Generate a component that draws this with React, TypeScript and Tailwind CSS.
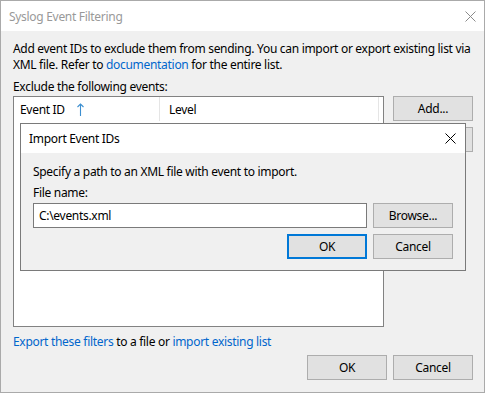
import React from 'react'

const font = { fontFamily: '"Noto Sans", "Segoe UI", Arial, sans-serif' }

function Btn({ label, focused = false }: { label: string; focused?: boolean }) {
  return (
    <button
      className={`flex h-[25px] w-[80px] shrink-0 items-center justify-center bg-[#e1e1e1] text-[12px] text-black ${
        focused ? 'border-2 border-[#0078d7]' : 'border border-[#adadad]'
      }`}
    >
      {label}
    </button>
  )
}

function CloseIcon({ color }: { color: string }) {
  return (
    <svg width="11" height="11" viewBox="0 0 11 11" fill="none">
      <path d="M0.5 0.5L10.5 10.5M10.5 0.5L0.5 10.5" stroke={color} strokeWidth="1" />
    </svg>
  )
}

export default function App() {
  return (
    <div style={font} className="relative flex h-[393px] w-[485px] flex-col border border-[#aaaaaa] bg-white text-[12px] leading-[15px] tracking-[-0.3px] text-black">
      {/* title bar */}
      <div className="flex h-[30px] shrink-0 items-center justify-between bg-white pl-[8px] pr-[8px]">
        <span className="text-[#999999]">Syslog Event Filtering</span>
        <CloseIcon color="#8a8a8a" />
      </div>

      <div className="flex flex-1 flex-col bg-[#f0f0f0] pl-[12px] pr-[11px] pt-[10px]">
        <p className="whitespace-nowrap leading-[16px]">
          Add event IDs to exclude them from sending. You can import or export existing list via
          <br />
          XML file. Refer to <span className="text-[#0066cc]">documentation</span> for the entire list.
        </p>
        <div className="mt-[6px]">Exclude the following events:</div>

        <div className="mt-[2px] flex gap-[9px]">
          <div className="h-[231px] w-[371px] border border-[#828282] bg-white">
            <div className="flex h-[24px] items-center">
              <div className="flex h-full w-[146px] items-center gap-[12px] border-r border-[#e5e5e5] pl-[6px]">
                <span>Event ID</span>
                <svg width="7" height="13" viewBox="0 0 7 13" fill="none">
                  <path d="M3.5 1V13M0.5 4L3.5 1L6.5 4" stroke="#3c8fd0" strokeWidth="1.1" />
                </svg>
              </div>
              <div className="flex h-full w-[219px] items-center border-r border-[#e5e5e5] pl-[9px]">Level</div>
            </div>
          </div>
          <div className="flex flex-col gap-[6px]">
            <Btn label="Add..." />
            <Btn label="Remove" />
          </div>
        </div>

        <div className="mt-[7px]">
          <span className="text-[#0066cc]">Export these filters</span> to a file or{' '}
          <span className="text-[#0066cc]">import existing list</span>
        </div>

        <div className="mt-[6px] flex justify-end gap-[6px]">
          <Btn label="OK" />
          <Btn label="Cancel" />
        </div>
      </div>

      {/* modal dialog */}
      <div className="absolute left-[19px] top-[122px] flex h-[148px] w-[446px] flex-col border border-[#7a7a7a] bg-white">
        <div className="flex h-[29px] shrink-0 items-center justify-between bg-white pl-[8px] pr-[9px]">
          <span>Import Event IDs</span>
          <CloseIcon color="#000000" />
        </div>
        <div className="flex flex-1 flex-col bg-[#f0f0f0] px-[12px] pt-[11px]">
          <div>Specify a path to an XML file with event to import.</div>
          <div className="mt-[6px]">File name:</div>
          <div className="mt-[3px] flex gap-[6px]">
            <div className="flex h-[25px] w-[334px] items-center border border-[#7a7a7a] bg-white pl-[5px]">C:\events.xml</div>
            <Btn label="Browse..." />
          </div>
          <div className="mt-[6px] flex justify-end gap-[6px]">
            <Btn label="OK" focused />
            <Btn label="Cancel" />
          </div>
        </div>
      </div>
    </div>
  )
}
